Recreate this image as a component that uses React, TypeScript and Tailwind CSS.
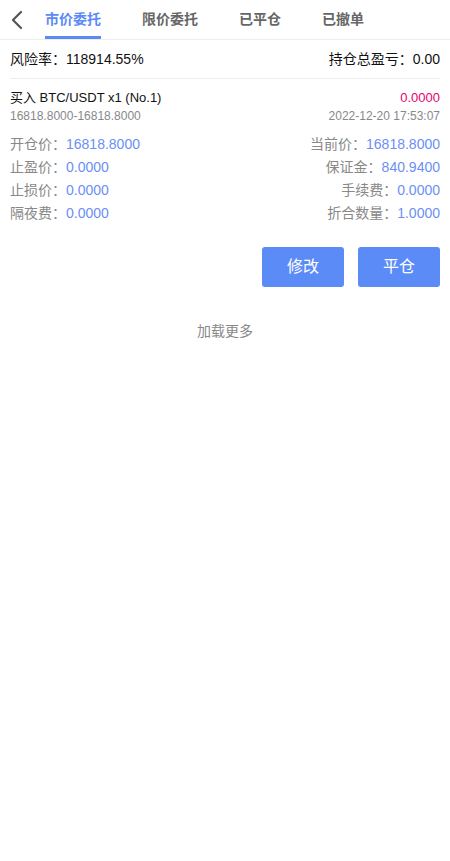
import React from "react";

const font = { fontFamily: '"Liberation Sans", Arial, "Noto Sans CJK SC", sans-serif' };

const tabs = ["市价委托", "限价委托", "已平仓", "已撤单"];

const details: [string, string, string, string][] = [
  ["开仓价", "16818.8000", "当前价", "16818.8000"],
  ["止盈价", "0.0000", "保证金", "840.9400"],
  ["止损价", "0.0000", "手续费", "0.0000"],
  ["隔夜费", "0.0000", "折合数量", "1.0000"],
];

export default function App() {
  return (
    <div className="min-h-[861px] w-[450px] bg-white" style={font}>
      <div className="flex h-10 items-stretch border-b border-[#eeeeee]">
        <div className="flex w-[45px] items-center pl-[10px]">
          <svg width="14" height="20" viewBox="0 0 14 20" fill="none">
            <path d="M11 2 L3 10 L11 18" stroke="#555555" strokeWidth="2.2" strokeLinecap="round" strokeLinejoin="round" />
          </svg>
        </div>
        <div className="flex gap-[41px]">
          {tabs.map((t, i) => (
            <div
              key={t}
              className={
                i === 0
                  ? "flex items-center border-b-[3px] border-[#5b8af5] pt-[3px] text-[14px] font-bold text-[#5b8af5]"
                  : "flex items-center pt-[3px] pb-[3px] text-[14px] font-bold text-[#666666]"
              }
            >
              {t}
            </div>
          ))}
        </div>
      </div>

      <div className="mx-[10px] flex h-[39px] items-center justify-between border-b border-[#eeeeee] pt-[1px] text-[14px] text-[#111111]">
        <span>风险率：118914.55%</span>
        <span>持仓总盈亏：0.00</span>
      </div>

      <div className="px-[10px] pt-[10px]">
        <div className="flex items-center justify-between text-[13px] leading-[18px]">
          <span className="text-[#111111]">买入 BTC/USDT x1 (No.1)</span>
          <span className="text-[#e6006e]">0.0000</span>
        </div>
        <div className="flex items-center justify-between text-[12px] leading-[18px] text-[#888888]">
          <span>16818.8000-16818.8000</span>
          <span>2022-12-20 17:53:07</span>
        </div>

        <div className="mt-[8px] flex flex-col text-[14px] leading-[23px]">
          {details.map(([a, av, b, bv]) => (
            <div key={a} className="flex justify-between">
              <span className="text-[#888888]">
                {a}：<span className="text-[#6b8ff5]">{av}</span>
              </span>
              <span className="text-[#888888]">
                {b}：<span className="text-[#6b8ff5]">{bv}</span>
              </span>
            </div>
          ))}
        </div>

        <div className="mt-[22px] flex justify-end gap-[14px]">
          <button className="h-10 w-[82px] rounded-[3px] bg-[#5b8bf7] text-[16px] text-white">修改</button>
          <button className="h-10 w-[82px] rounded-[3px] bg-[#5b8bf7] text-[16px] text-white">平仓</button>
        </div>
      </div>

      <div className="mt-[34px] text-center text-[14px] text-[#888888]">加载更多</div>
    </div>
  );
}
